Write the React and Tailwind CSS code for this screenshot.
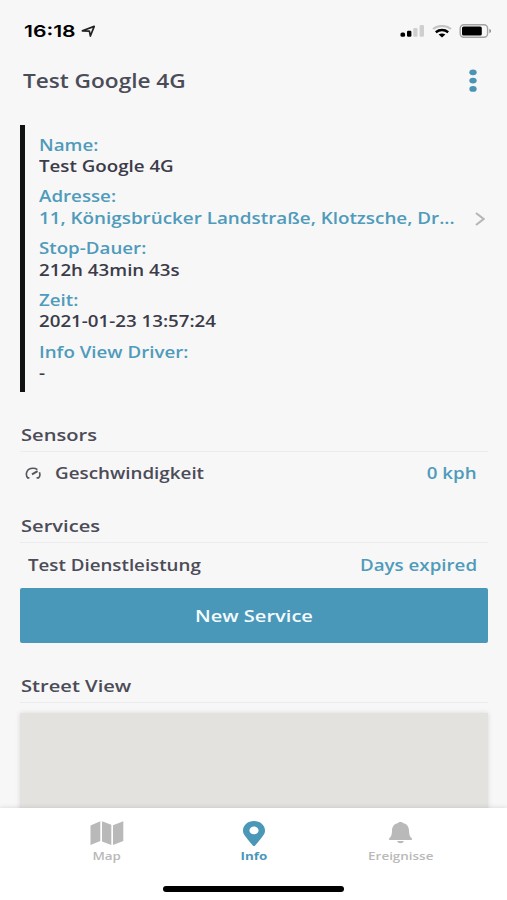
import { FaMapMarkerAlt } from "react-icons/fa";

const details = [
  { label: "Name:", value: "Test Google 4G" },
  { label: "Adresse:", value: "11, Königsbrücker Landstraße, Klotzsche, Dr...", link: true },
  { label: "Stop-Dauer:", value: "212h 43min 43s" },
  { label: "Zeit:", value: "2021-01-23 13:57:24" },
  { label: "Info View Driver:", value: "-" },
];

function StatusBar() {
  return (
    <div className="flex h-[60px] shrink-0 items-center justify-between pt-[2px] pr-[15px] pl-[24px] text-black">
      <div className="flex items-center">
        <span className="w-[57px] whitespace-nowrap font-['Inter'] text-[16.5px] font-semibold">
          <span className="inline-block origin-left scale-x-[1.28]">16:18</span>
        </span>
        <svg width="15" height="13" viewBox="0 0 15 13" fill="none">
          <path d="M1.4 5.8 13.2 1.4 9.4 11 8.4 6.2Z" stroke="#222" strokeWidth="1.7" strokeLinejoin="round" />
        </svg>
      </div>
      <div className="flex items-center">
        <svg width="25" height="14" viewBox="0 0 25 14">
          <rect x="0.5" y="8.5" width="4.6" height="4.3" rx="1.6" />
          <rect x="7" y="6.8" width="4.4" height="6" rx="1.2" />
          <rect x="13.3" y="4" width="4.2" height="8.8" rx="1.2" fill="#cfcfcf" />
          <rect x="19.6" y="1" width="4.4" height="11.8" rx="1.2" fill="#cfcfcf" />
        </svg>
        <svg width="20" height="13" viewBox="0 0 20 13" fill="none" className="ml-[7px]">
          <path d="M1 4C6 0 14 0 19 4" stroke="#c4c4c4" strokeWidth="2.2" />
          <path d="M3.8 7.2C7.5 4.4 12.5 4.4 16.2 7.2" stroke="#000" strokeWidth="2.5" />
          <path d="M6.6 9.6C8.6 8.2 11.4 8.2 13.4 9.6L10 12.6Z" fill="#000" />
        </svg>
        <svg width="33" height="14" viewBox="0 0 33 14" className="ml-[7px]">
          <rect x="1.2" y="0.8" width="27.4" height="12.4" rx="3.6" fill="none" stroke="#a3a3a3" strokeWidth="1.4" />
          <rect x="3" y="2.4" width="19.8" height="9.2" rx="1.6" />
          <path d="M30.4 5V9C31.6 8.6 32 7.8 32 7S31.6 5.4 30.4 5Z" fill="#8a8a8a" />
        </svg>
      </div>
    </div>
  );
}

function Header() {
  return (
    <header className="flex h-[42px] shrink-0 items-center justify-between pr-[30px] pl-[23px]">
      <h1 className="origin-left scale-x-[1.19] text-[19px] font-semibold text-[#4c4c59]">Test Google 4G</h1>
      <svg width="8" height="24" viewBox="0 0 8 24" fill="#4b94b6">
        <ellipse cx="4" cy="3.3" rx="3.7" ry="2.9" />
        <ellipse cx="4" cy="11.6" rx="3.7" ry="2.9" />
        <ellipse cx="4" cy="19.9" rx="3.7" ry="2.9" />
      </svg>
    </header>
  );
}

function DetailRow({ label, value, link }) {
  return (
    <div className="leading-[21.5px]">
      <div className="flex text-[#4f9bbb]">
        <span className="origin-left scale-x-[1.17]">{label}</span>
      </div>
      <div className="flex items-center justify-between">
        <span
          className={`origin-left whitespace-nowrap ${
            link ? "scale-x-[1.177] text-[#4f9bbb]" : "scale-x-[1.17] text-[#3c3b49]"
          }`}
        >
          {value}
        </span>
        {link && (
          <svg width="10" height="14" viewBox="0 0 10 14" fill="none" stroke="#b5b5b5" strokeWidth="2">
            <path d="M1 1 8.6 7 1 13" />
          </svg>
        )}
      </div>
    </div>
  );
}

function SectionTitle({ children }) {
  return (
    <h2 className="flex h-[33px] items-center border-b border-[#ececec] pl-[1px] text-[16.5px] text-[#4c4b58]">
      <span className="origin-left scale-x-[1.22]">{children}</span>
    </h2>
  );
}

function Tab({ icon, label, active }) {
  return (
    <button className={`flex w-[147px] flex-col items-center ${active ? "text-[#4a97b8]" : "text-[#b9b9b9]"}`}>
      <span className="flex h-[26px] items-center">{icon}</span>
      <span className={`mt-[2px] text-[11px] leading-[16px] scale-x-[1.22] ${active ? "font-bold" : "font-semibold"}`}>
        {label}
      </span>
    </button>
  );
}

const mapIcon = (
  <svg width="34" height="26" viewBox="0 0 34 26" fill="currentColor">
    <path d="M0.5 5.5 10.3 1.3V21L0.5 25Z" />
    <path d="M12 1.3 21.3 4.8V25L12 21.5Z" />
    <path d="M23 5.2 33.3 1.3V21L23 25Z" />
  </svg>
);

const bellIcon = (
  <svg width="25" height="24" viewBox="0 0 25 24" fill="currentColor">
    <path d="M12.5 1C14 1 14.7 1.5 15 2C19 2.9 20.9 5.8 21 9.5C21.1 14 22 16 24 17.6Q24.7 18.9 23.2 18.9H1.8Q0.3 18.9 1 17.6C3 16 3.9 14 4 9.5C4.1 5.8 6 2.9 10 2C10.3 1.5 11 1 12.5 1Z" />
    <path d="M9.2 20H15.8C15.3 22.9 9.7 22.9 9.2 20Z" />
  </svg>
);

export default function App() {
  return (
    <div className="flex h-[900px] w-[507px] flex-col overflow-hidden bg-[#f7f7f7] font-['Open_Sans',sans-serif] text-[16px] font-semibold">
      <StatusBar />
      <Header />

      <main className="min-h-0 flex-1 overflow-hidden pt-[23px] pr-[19px] pl-[20px]">
        <section className="flex h-[267px] flex-col gap-[8.8px] border-l-[5px] border-[#111313] pt-[9.6px] pr-[3px] pl-[14px]">
          {details.map((d) => (
            <DetailRow key={d.label} {...d} />
          ))}
        </section>

        <section className="mt-[27px]">
          <SectionTitle>Sensors</SectionTitle>
          <div className="flex h-[44px] items-center pr-[11px] pb-[2px] pl-[5px]">
            <svg width="16" height="13" viewBox="0 0 16 13" fill="none" stroke="#55555e" strokeWidth="1.6">
              <path d="M3 11.2C-.2 7.6 1.4 1.4 8 1.3C10 1.3 11.3 1.8 12.4 2.6M14.4 5.2C15.4 7.6 14.8 9.8 13.3 11.2" />
              <path d="M7 7.4 12.6 4.2" strokeWidth="2" />
              <path d="M2.4 10.9H4.4M11.6 10.9H13.8" />
            </svg>
            <span className="ml-[14px] origin-left scale-x-[1.175] text-[#4c4b58]">Geschwindigkeit</span>
            <span className="ml-auto origin-right scale-x-[1.17] text-[#4f9bbb]">0 kph</span>
          </div>
        </section>

        <section className="mt-[14px]">
          <SectionTitle>Services</SectionTitle>
          <div className="flex h-[45px] items-center justify-between pr-[11px] pb-[2px] pl-[8px]">
            <span className="origin-left scale-x-[1.17] text-[#4c4b58]">Test Dienstleistung</span>
            <span className="origin-right scale-x-[1.17] text-[#4f9bbb]">Days expired</span>
          </div>
          <button className="flex h-[55px] w-full items-center justify-center rounded-[2px] bg-[#4a98b9] pt-px text-[17px] text-[#f4fbfd]">
            <span className="scale-x-[1.18]">New Service</span>
          </button>
        </section>

        <section className="mt-[27px]">
          <SectionTitle>Street View</SectionTitle>
          <div className="mt-[10px] h-[120px] bg-[#e3e2de] shadow-[0_0_5px_rgba(0,0,0,0.12)]" />
        </section>
      </main>

      <footer className="relative flex h-[92px] shrink-0 flex-col items-center bg-white shadow-[0_-1px_4px_rgba(0,0,0,0.1)]">
        <nav className="flex pt-[12px]">
          <Tab icon={mapIcon} label="Map" />
          <Tab icon={<FaMapMarkerAlt className="h-[25px] w-[22px]" preserveAspectRatio="none" />} label="Info" active />
          <Tab icon={bellIcon} label="Ereignisse" />
        </nav>
        <div className="mt-[22px] h-[6px] w-[181px] rounded-full bg-black" />
      </footer>
    </div>
  );
}
